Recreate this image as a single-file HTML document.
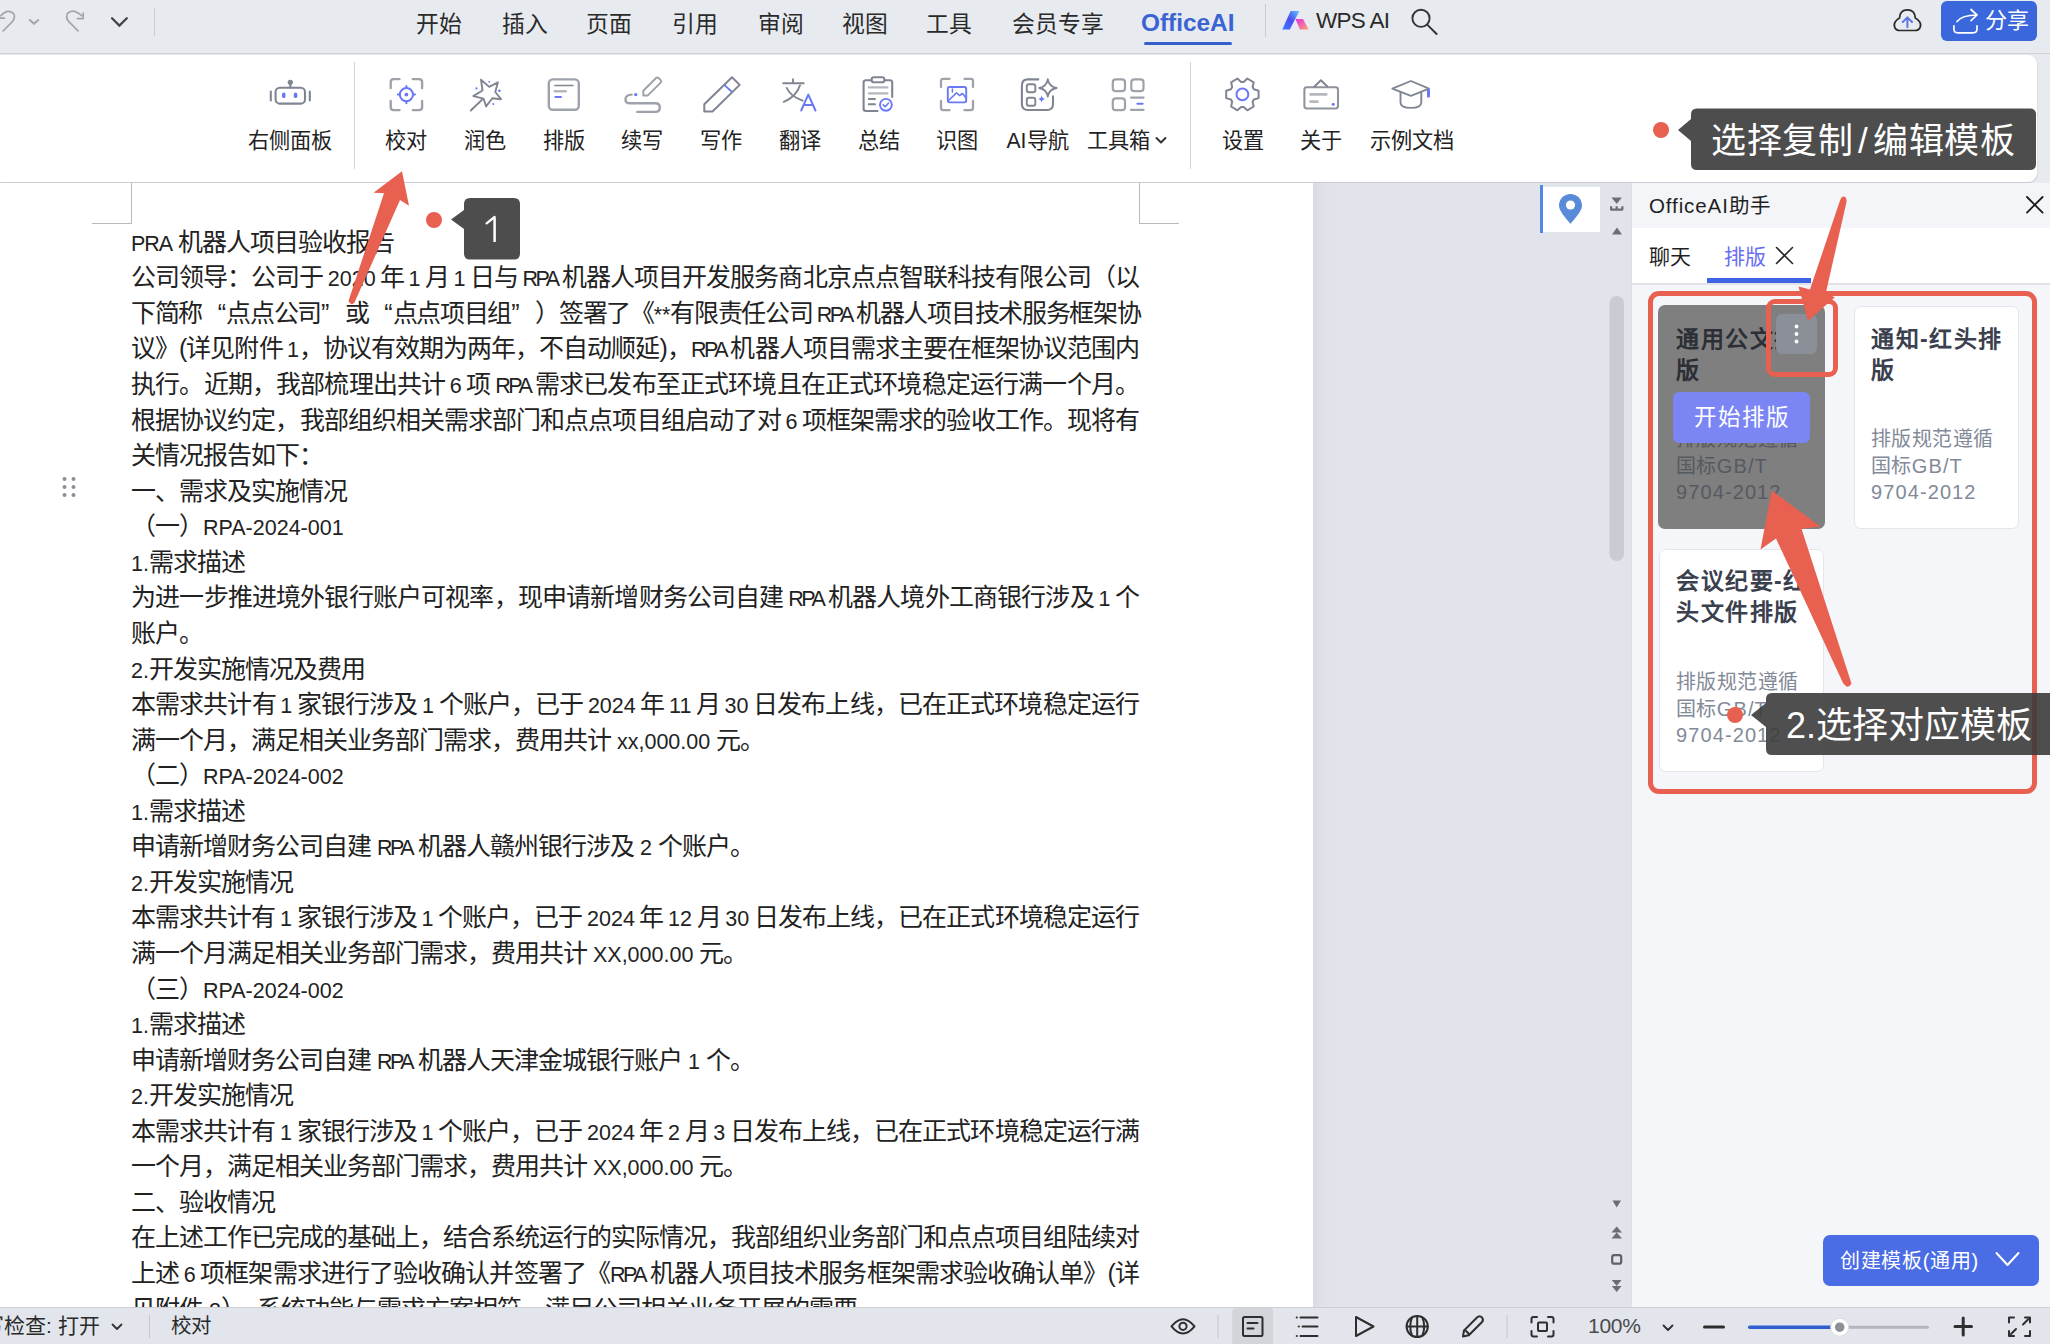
<!DOCTYPE html>
<html lang="zh-CN">
<head>
<meta charset="utf-8">
<style>
*{box-sizing:border-box;margin:0;padding:0}
html,body{width:2050px;height:1344px;overflow:hidden;background:#e7ebef;font-family:"Liberation Sans",sans-serif;color:#222}
.a{position:absolute}
#top{left:0;top:0;width:2050px;height:54px;background:#e7ebef;border-bottom:1px solid #cfd3d8}
.tab{position:absolute;top:9px;font-size:22.8px;line-height:30px;color:#2a2a2a;white-space:nowrap}
#ribbon{left:0;top:55px;width:2037px;height:127px;background:#fff;border-radius:0 9px 9px 0;box-shadow:0 1px 2px rgba(0,0,0,.18)}
.lbl{position:absolute;top:126.5px;font-size:21.2px;line-height:28px;color:#222;white-space:nowrap;transform:translateX(-50%)}
.ico{position:absolute}
.sep{position:absolute;width:1px;background:#d6d8dc}
#doc{left:0;top:183px;width:1313px;height:1124px;background:#fff;overflow:hidden}
#gray{left:1313px;top:183px;width:318px;height:1124px;background:linear-gradient(90deg,#d8dbe2 0,#e0e3ea 12px,#e1e4eb 60px)}
#side{left:1631px;top:183px;width:419px;height:1124px;background:#f5f6f9;border-left:1px solid #dcdee3}
#status{left:0;top:1307px;width:2050px;height:37px;background:#e2e5ec;border-top:1px solid #cdd0d6}
.dl{position:absolute;left:131px;width:1008px;font-size:25px;letter-spacing:-1px;line-height:35.5px;height:35.5px;color:#222;white-space:nowrap}
.j{text-align:justify;text-align-last:justify}
.e{font-size:21.5px;letter-spacing:0}
.r{letter-spacing:-2.5px}
.qo{display:inline-block;width:24px;text-align:right;text-align-last:right;letter-spacing:0}
.qc{display:inline-block;width:24px;text-align:left;text-align-last:left;letter-spacing:0}
.j{word-spacing:-1.5px}
.card{background:#fff;border:1px solid #e4e6ea;border-radius:7px}
.ct{font-size:23px;line-height:31px;font-weight:bold;color:#3a404e;white-space:nowrap;letter-spacing:1.5px}
.cd{font-size:20px;line-height:26.5px;color:#828a98;white-space:nowrap;letter-spacing:0.4px}
.cd b{font-weight:normal;letter-spacing:1.1px}
</style>
</head>
<body>
<div id="top" class="a">
<svg class="a" style="left:0;top:0" width="160" height="54" viewBox="0 0 160 54">
 <path d="M3 31 L12.2 21.8 Q15.8 17.6 13.6 13.6 Q10.8 10.4 6.5 11.6 Q3.4 12.6 0.8 15.8 M0 18.2 H4.4" fill="none" stroke="#a2a5aa" stroke-width="1.7" stroke-linecap="round" stroke-linejoin="round"/>
 <path d="M29.8 20 L34 23.8 L38.2 20" fill="none" stroke="#a2a5aa" stroke-width="2" stroke-linecap="round" stroke-linejoin="round"/>
 <path d="M78 30.8 L68.8 21.6 Q65.2 17.4 67.6 13.4 Q70.4 10.4 74.6 11.4 Q78.2 12.4 81.6 15.6 M83.2 13.2 V18.6 H77.6" fill="none" stroke="#a2a5aa" stroke-width="1.7" stroke-linecap="round" stroke-linejoin="round"/>
 <path d="M112 18.2 L119.4 25.6 L126.8 18.2" fill="none" stroke="#454545" stroke-width="2.3" stroke-linecap="round"/>
 <rect x="154" y="8" width="1" height="28" fill="#c8cbd0"/>
</svg>
<div class="tab" style="left:416px">开始</div>
<div class="tab" style="left:502px">插入</div>
<div class="tab" style="left:586px">页面</div>
<div class="tab" style="left:672px">引用</div>
<div class="tab" style="left:758px">审阅</div>
<div class="tab" style="left:842px">视图</div>
<div class="tab" style="left:926px">工具</div>
<div class="tab" style="left:1012px">会员专享</div>
<div class="tab" style="left:1141px;top:8.3px;font-weight:bold;font-size:24.4px;color:#3b63d4">OfficeAI</div>
<div class="a" style="left:1143.5px;top:41.7px;width:88.5px;height:3.2px;background:#3460cc;border-radius:2px"></div>
<div class="a" style="left:1265px;top:4px;width:1px;height:33px;background:#c8cbd0"></div>
<svg class="a" style="left:0;top:0" width="1450" height="45" viewBox="0 0 1450 45">
 <defs><linearGradient id="wg1" x1="0" y1="1" x2="1" y2="0"><stop offset="0" stop-color="#3d7bff"/><stop offset=".5" stop-color="#4b4cf2"/><stop offset="1" stop-color="#5ccbff"/></linearGradient>
 <linearGradient id="wg2" x1="0" y1="0" x2="1" y2="1"><stop offset="0" stop-color="#e02ee8"/><stop offset="1" stop-color="#ffa070"/></linearGradient></defs>
 <path d="M1282.3 29.4 L1290.6 11 L1299.4 11 L1289.8 29.4 Z" fill="url(#wg1)"/>
 <path d="M1295.5 19 L1303 19 L1308.6 29.4 L1299.9 29.4 Z" fill="url(#wg2)"/>
 <circle cx="1421" cy="18.3" r="8.6" fill="none" stroke="#333" stroke-width="1.9"/>
 <path d="M1427.2 24.6 L1436.6 34" stroke="#333" stroke-width="2" stroke-linecap="round"/>
</svg>
<div class="tab" style="left:1316px;top:6px;font-size:22.5px;color:#2a2a2a;letter-spacing:-0.7px">WPS AI</div>
<div class="a" style="left:1941px;top:1px;width:96px;height:40px;background:#3a67db;border-radius:6px"></div>
<svg class="a" style="left:0;top:0" width="2050" height="45" viewBox="0 0 2050 45">
 <path d="M1900 30.5 C1894 30.5 1893.2 24.5 1895.5 21.5 C1897 19.5 1898.5 18.5 1899.5 18 C1899.8 12.5 1903.2 9.8 1907.4 9.8 C1911.6 9.8 1915 12.5 1915.3 18 C1916.3 18.5 1918 19.5 1919.4 21.5 C1921.7 24.5 1920.8 30.5 1914.8 30.5 Z" fill="none" stroke="#2b2b2b" stroke-width="1.7"/>
 <path d="M1907.4 27.3 V17.8 M1902.8 22 L1907.4 17.4 L1912 22" fill="none" stroke="#5d74e8" stroke-width="2" stroke-linecap="round" stroke-linejoin="round"/>
 <path d="M1953.9 25.8 V29 Q1953.9 32.8 1957.7 32.8 H1973.2 Q1977 32.8 1977 29 V25.8" fill="none" stroke="#fff" stroke-width="1.7" stroke-linecap="round"/>
 <path d="M1957 21.6 Q1962 15 1977 15 M1971 9.5 L1977 15 L1971 20.7" fill="none" stroke="#fff" stroke-width="1.7" stroke-linecap="round" stroke-linejoin="round"/>
</svg>


<div class="tab" style="left:1985px;top:6px;color:#fff;font-size:22px">分享</div>
</div>
<div id="ribbon" class="a"></div>
<svg class="a" style="left:0;top:0" width="1460" height="183" viewBox="0 0 1460 183">
<g fill="none" stroke="#7f8591" stroke-width="2.1" stroke-linecap="round" stroke-linejoin="round">
 <!-- robot -->
 <rect x="275.6" y="87.8" width="29.4" height="15.8" rx="4.2"/>
 <path d="M270.8 91.5 V100.5 M309.8 91.5 V100.5 M290.3 84 V87.5"/>
 <circle cx="290.3" cy="82.3" r="1.6" fill="#7f8591"/>
 <!-- jiaodui brackets -->
 <path d="M390.7 88 V82 Q390.7 79.1 393.6 79.1 H399.5 M412.8 79.1 H419 Q422.1 79.1 422.1 82 V88 M422.1 101 V107.2 Q422.1 110.1 419 110.1 H412.8 M399.5 110.1 H393.6 Q390.7 110.1 390.7 107.2 V101" stroke="#9ea3ab" stroke-width="2.4"/>
 <!-- star wand -->
 <path d="M481 79.7 L489.2 86.9 L497.9 82.3 L495.3 92 L501 99.2 L492.3 98.2 L486.1 106.4 L483.6 98.7 L473.3 96.1 L482.5 90.5 Z" stroke-width="1.9"/>
 <path d="M470.8 110.5 L482 99.7" stroke-width="1.9"/>
 <!-- paiban -->
 <rect x="548.8" y="79.4" width="30" height="30.4" rx="4" stroke="#9ea3ab" stroke-width="2.4"/>
 <path d="M554.8 85.4 H573" stroke-width="1.5"/>
 <path d="M554.8 91.3 H565.6" stroke="#b4b8be" stroke-width="2.6"/>
 <!-- xuxie pencil -->
 <path d="M643.3 90.8 L655.8 78.3 Q657.3 76.8 658.8 78.3 L660.4 79.9 Q661.9 81.4 660.4 82.9 L647.9 95.4 L643.3 95.4 Z" stroke="#9ea3ab" stroke-width="2"/>
 <path d="M631.6 94.6 Q625.5 95 625.5 99.2 Q625.5 103.3 630 103.3 H655.5 Q659.8 103.3 659.8 107.6 Q659.8 111.9 655.5 111.9 H637.3" stroke="#9ea3ab" stroke-width="2.4"/>
 <!-- xiezuo pencil -->
 <path d="M704.3 111.5 H712.5 L739.7 84.9 L732 77.2 L704.3 104.3 Z" stroke-width="2"/>
 <!-- wen -->
 <path d="M783.2 83.3 H803.7 M793 79.2 V83 M786.8 88 Q790 96 802.7 100.7 M800 85.4 Q796 97 783.7 101.8" stroke-width="1.9"/>
 <!-- clipboard -->
 <path d="M871.5 80.2 H866 Q863.6 80.2 863.6 82.6 V108.8 Q863.6 111 866 111 H877.5 M884.6 80.2 H889.8 Q892.2 80.2 892.2 82.6 V97" stroke-width="2.1"/>
 <rect x="871.6" y="77.2" width="12.8" height="5" rx="2.3"/>
 <path d="M868.8 87.4 H887.5 M868.8 93.4 H887.5" stroke="#b4b8be" stroke-width="2.1"/>
 <path d="M868.8 99 H875 M868.8 104.3 H875" stroke-width="1.9"/>
 <!-- shitu brackets -->
 <path d="M941 87 V81 Q941 78.8 943.5 78.8 H949.5 M964.5 78.8 H970.8 Q973 78.8 973 81 V87 M973 101 V107.8 Q973 110.2 970.8 110.2 H964.5 M949.5 110.2 H943.5 Q941 110.2 941 107.8 V101" stroke="#9ea3ab" stroke-width="2.3"/>
 <!-- ai nav -->
 <path d="M1038.3 79.4 H1028 Q1021.9 79.4 1021.9 85.5 V104 Q1021.9 110 1028 110 H1047 Q1053 110 1053 104 V96.4" stroke-width="2.1"/>
 <rect x="1026.8" y="84.2" width="8.5" height="8" rx="2" stroke-width="1.9"/>
 <rect x="1026.8" y="97.8" width="8.5" height="8" rx="2" stroke-width="1.9"/>
 <path d="M1047.8 79.2 Q1049 86.8 1056.6 88 Q1049 89.2 1047.8 96.6 Q1046.6 89.2 1039.2 88 Q1046.6 86.8 1047.8 79.2 Z" stroke-width="1.8"/>
 <!-- toolbox -->
 <rect x="1112.8" y="79.4" width="12.2" height="11.8" rx="3" stroke="#9ea3ab" stroke-width="2.2"/>
 <rect x="1131.3" y="79.4" width="12.2" height="11.8" rx="3" stroke="#9ea3ab" stroke-width="2.2"/>
 <rect x="1112.8" y="98.4" width="12.2" height="11.8" rx="3" stroke="#9ea3ab" stroke-width="2.2"/>
 <path d="M1131 97.6 H1143.6 M1131 109.8 H1143.6" stroke="#9ea3ab" stroke-width="2.2"/>
 <!-- gear -->
 <path d="M1253.9 89.3 L1258.6 90.7 L1258.6 98.1 L1253.9 99.5 L1252.6 101.8 L1253.7 106.5 L1247.3 110.3 L1243.7 106.9 L1241.1 106.9 L1237.5 110.3 L1231.1 106.5 L1232.2 101.8 L1230.9 99.5 L1226.2 98.1 L1226.2 90.7 L1230.9 89.3 L1232.2 87.0 L1231.1 82.3 L1237.5 78.5 L1241.1 81.9 L1243.7 81.9 L1247.3 78.5 L1253.7 82.3 L1252.6 87.0 Z" stroke-width="2"/>
 <!-- about sign -->
 <rect x="1304.4" y="87.2" width="33.6" height="21.3" rx="2.4" stroke="#8e939d" stroke-width="2.1"/>
 <path d="M1314.5 86.5 L1320.9 80.2 L1327.3 86.5" stroke-width="2"/>
 <path d="M1310.6 94.4 H1326.2" stroke="#b4b8be" stroke-width="2.8"/>
 <path d="M1310.6 101.6 H1317.4" stroke="#b4b8be" stroke-width="2.8"/>
 <!-- grad cap -->
 <path d="M1392.3 88.7 L1410.9 81 L1429 88.7 L1410.9 95.8 Z" stroke-width="1.8"/>
 <path d="M1400.5 92.2 V102.5 Q1400.5 107.9 1410.9 107.9 Q1421.3 107.9 1421.3 102.5 V92.2" stroke-width="1.9"/>
</g>
<g fill="#6b78f6" stroke="none">
 <rect x="282" y="92.4" width="3.5" height="5.7" rx="1.7"/>
 <rect x="293.8" y="92.4" width="3.5" height="5.7" rx="1.7"/>
 <circle cx="406.4" cy="94.6" r="1.9"/>
 <circle cx="476.4" cy="88.4" r="1.1"/><circle cx="489.2" cy="81.8" r="0.9"/><circle cx="499.4" cy="90.7" r="1.3"/><circle cx="493.3" cy="104" r="1"/>
 <rect x="554.3" y="95.9" width="7.7" height="2" rx="1"/>
 <circle cx="635.7" cy="94.6" r="1.7"/>
 <circle cx="1333.2" cy="104.2" r="1.5"/>
 <path d="M1041.6 95.5 Q1042.1 98.5 1045.1 99 Q1042.1 99.5 1041.6 102.5 Q1041.1 99.5 1038.1 99 Q1041.1 98.5 1041.6 95.5 Z"/>
 <rect x="1427" y="89" width="3" height="8.4" rx="1"/>
 <rect x="1136.4" y="102.7" width="7.3" height="2" rx="1"/>
</g>
<g fill="none" stroke="#6b78f6" stroke-width="2" stroke-linecap="round" stroke-linejoin="round">
 <circle cx="406.4" cy="94.6" r="6.6"/>
 <path d="M406.4 86 V88 M406.4 101.2 V103.2 M397.8 94.6 H399.8 M413 94.6 H415"/>
 <path d="M724.8 85.4 L731.5 91.5" stroke-width="1.8"/>
 <path d="M801.2 110.5 L808.3 94.6 L815.5 110.5 M803.5 105 H813" stroke-width="2"/>
 <circle cx="885.9" cy="104.8" r="5.9" stroke-width="1.9"/>
 <path d="M883.2 104.9 L885.2 106.7 L888.6 103" stroke-width="1.6"/>
 <rect x="947.8" y="87" width="18.4" height="15.4" rx="1.8" stroke-width="1.9"/>
 <path d="M948.5 100.5 L956.5 92.8 L959.5 95.5 L962.5 93.5 L966 98" stroke-width="1.6"/>
 <path d="M952.4 89 V92" stroke-width="1.6"/>
 <circle cx="1242.4" cy="94.4" r="5.9" stroke-width="2"/>
</g>
<rect x="354" y="62" width="1" height="107" fill="#d2d4d8"/>
<rect x="1190" y="62" width="1" height="107" fill="#d2d4d8"/>
</svg>
<div class="lbl" style="left:290.3px">右侧面板</div>
<div class="lbl" style="left:406.3px">校对</div>
<div class="lbl" style="left:484.5px">润色</div>
<div class="lbl" style="left:563.5px">排版</div>
<div class="lbl" style="left:642px">续写</div>
<div class="lbl" style="left:721.3px">写作</div>
<div class="lbl" style="left:799.7px">翻译</div>
<div class="lbl" style="left:878.6px">总结</div>
<div class="lbl" style="left:956.8px">识图</div>
<div class="lbl" style="left:1037.5px">AI导航</div>
<div class="lbl" style="left:1118.8px">工具箱</div>
<svg class="a" style="left:1154px;top:134px" width="14" height="12" viewBox="0 0 14 12"><path d="M2.5 4 L7 8.5 L11.5 4" fill="none" stroke="#333" stroke-width="2" stroke-linecap="round" stroke-linejoin="round"/></svg>
<div class="lbl" style="left:1242.5px">设置</div>
<div class="lbl" style="left:1320.8px">关于</div>
<div class="lbl" style="left:1411.5px">示例文档</div>
<div id="doc" class="a">
<div class="a" style="left:131px;top:0;width:1px;height:40px;background:#b9b9b9"></div>
<div class="a" style="left:92px;top:40px;width:40px;height:1px;background:#b9b9b9"></div>
<div class="a" style="left:1139px;top:0;width:1px;height:40px;background:#b9b9b9"></div>
<div class="a" style="left:1139px;top:40px;width:40px;height:1px;background:#b9b9b9"></div>
<svg class="a" style="left:60px;top:292px" width="20" height="28" viewBox="0 0 20 28"><g fill="#8a8f97"><circle cx="4.5" cy="4" r="2"/><circle cx="13.5" cy="4" r="2"/><circle cx="4.5" cy="12" r="2"/><circle cx="13.5" cy="12" r="2"/><circle cx="4.5" cy="20" r="2"/><circle cx="13.5" cy="20" r="2"/></g></svg>
<div class="dl" style="top:41.8px"><span class="e" style="letter-spacing:-1px">PRA</span> 机器人项目验收报告</div>
<div class="dl j" style="top:77.3px">公司领导：公司于 <span class="e">2020</span> 年 <span class="e">1</span> 月 <span class="e">1</span> 日与 <span class="e r">RPA</span> 机器人项目开发服务商北京点点智联科技有限公司（以</div>
<div class="dl j" style="top:112.9px;letter-spacing:-1.3px">下简称<span class="qo">“</span>点点公司<span class="qc">”</span>或<span class="qo">“</span>点点项目组<span class="qc">”</span>）签署了《<span class="e">**</span>有限责任公司 <span class="e r">RPA</span> 机器人项目技术服务框架协</div>
<div class="dl j" style="top:148.4px">议》(详见附件 <span class="e">1</span>，协议有效期为两年，不自动顺延)，<span class="e r">RPA</span> 机器人项目需求主要在框架协议范围内</div>
<div class="dl j" style="top:184.0px">执行。近期，我部梳理出共计 <span class="e">6</span> 项 <span class="e r">RPA</span> 需求已发布至正式环境且在正式环境稳定运行满一个月。</div>
<div class="dl j" style="top:219.6px">根据协议约定，我部组织相关需求部门和点点项目组启动了对 <span class="e">6</span> 项框架需求的验收工作。现将有</div>
<div class="dl" style="top:255.1px">关情况报告如下：</div>
<div class="dl" style="top:290.7px">一、需求及实施情况</div>
<div class="dl" style="top:326.2px">（一）<span class="e">RPA-2024-001</span></div>
<div class="dl" style="top:361.8px"><span class="e">1.</span>需求描述</div>
<div class="dl j" style="top:397.4px">为进一步推进境外银行账户可视率，现申请新增财务公司自建 <span class="e r">RPA</span> 机器人境外工商银行涉及 <span class="e">1</span> 个</div>
<div class="dl" style="top:432.9px">账户。</div>
<div class="dl" style="top:468.5px"><span class="e">2.</span>开发实施情况及费用</div>
<div class="dl j" style="top:504.0px">本需求共计有 <span class="e">1</span> 家银行涉及 <span class="e">1</span> 个账户，已于 <span class="e">2024</span> 年 <span class="e">11</span> 月 <span class="e">30</span> 日发布上线，已在正式环境稳定运行</div>
<div class="dl" style="top:539.6px">满一个月，满足相关业务部门需求，费用共计 <span class="e">xx,000.00</span> 元。</div>
<div class="dl" style="top:575.2px">（二）<span class="e">RPA-2024-002</span></div>
<div class="dl" style="top:610.7px"><span class="e">1.</span>需求描述</div>
<div class="dl" style="top:646.3px">申请新增财务公司自建 <span class="e r">RPA</span> 机器人赣州银行涉及 <span class="e">2</span> 个账户。</div>
<div class="dl" style="top:681.8px"><span class="e">2.</span>开发实施情况</div>
<div class="dl j" style="top:717.4px">本需求共计有 <span class="e">1</span> 家银行涉及 <span class="e">1</span> 个账户，已于 <span class="e">2024</span> 年 <span class="e">12</span> 月 <span class="e">30</span> 日发布上线，已在正式环境稳定运行</div>
<div class="dl" style="top:753.0px">满一个月满足相关业务部门需求，费用共计 <span class="e">XX,000.00</span> 元。</div>
<div class="dl" style="top:788.5px">（三）<span class="e">RPA-2024-002</span></div>
<div class="dl" style="top:824.1px"><span class="e">1.</span>需求描述</div>
<div class="dl" style="top:859.6px">申请新增财务公司自建 <span class="e r">RPA</span> 机器人天津金城银行账户 <span class="e">1</span> 个。</div>
<div class="dl" style="top:895.2px"><span class="e">2.</span>开发实施情况</div>
<div class="dl j" style="top:930.8px">本需求共计有 <span class="e">1</span> 家银行涉及 <span class="e">1</span> 个账户，已于 <span class="e">2024</span> 年 <span class="e">2</span> 月 <span class="e">3</span> 日发布上线，已在正式环境稳定运行满</div>
<div class="dl" style="top:966.3px">一个月，满足相关业务部门需求，费用共计 <span class="e">XX,000.00</span> 元。</div>
<div class="dl" style="top:1001.9px">二、验收情况</div>
<div class="dl j" style="top:1037.4px">在上述工作已完成的基础上，结合系统运行的实际情况，我部组织业务部门和点点项目组陆续对</div>
<div class="dl j" style="top:1073.0px">上述 <span class="e">6</span> 项框架需求进行了验收确认并签署了《<span class="e r">RPA</span> 机器人项目技术服务框架需求验收确认单》(详</div>
<div class="dl" style="top:1108.6px">见附件 <span class="e">2</span>）。系统功能与需求方案相符，满足公司相关业务开展的需要。</div>
</div>
<div id="gray" class="a"></div>
<div class="a" style="left:1540px;top:185px;width:3px;height:48px;background:#4f86e8"></div>
<div class="a" style="left:1543px;top:187px;width:56.5px;height:44.5px;background:#fff"></div>
<svg class="a" style="left:1500px;top:183px" width="131" height="1124" viewBox="1500 183 131 1124">
 <path d="M1570.5 223.7 C1566 218.5 1559 211 1559 205.5 C1559 199 1564 194 1570.5 194 C1577 194 1582 199 1582 205.5 C1582 211 1575 218.5 1570.5 223.7 Z" fill="#5a8bd8"/>
 <circle cx="1570.5" cy="205" r="4.6" fill="#fff"/>
 <g fill="#6c6e73">
  <path d="M1612.3 197.5 Q1611.6 197.2 1612 198.2 L1616.2 203.3 Q1616.7 203.8 1617.2 203.3 L1621.4 198.2 Q1621.8 197.2 1621 197.5 Z"/>
  <path d="M1610 206.2 H1612.2 V208.6 H1615.6 V206.2 H1617.8 V208.6 H1621.3 V206.2 H1623.5 V209.2 Q1623.5 210.8 1621.9 210.8 H1611.6 Q1610 210.8 1610 209.2 Z"/>
  <path d="M1612 234.6 H1622 L1617 227.6 Z"/>
  <path d="M1612.5 1200.5 H1621 L1616.7 1207.5 Z"/>
  <path d="M1611.5 1232.5 H1622 L1616.7 1226.5 Z M1611.5 1238.5 H1622 L1616.7 1232.5 Z"/>
  <path d="M1611.8 1280 H1621.6 L1616.7 1286 Z M1611.8 1286 H1621.6 L1616.7 1292 Z"/>
 </g>
 <rect x="1612.2" y="1255.2" width="9" height="8.5" rx="2" fill="none" stroke="#5d6068" stroke-width="2.2"/>
 <rect x="1609.5" y="296" width="14.5" height="265" rx="7.2" fill="#c9ccd1"/>
</svg>
<div id="side" class="a"></div>
<div class="a" style="left:1632px;top:183px;width:418px;height:45px;background:#f3f5f8"></div>
<div class="a" style="left:1649px;top:190px;font-size:20.5px;line-height:32px;color:#1f1f1f;white-space:nowrap;letter-spacing:0.9px">OfficeAI助手</div>
<svg class="a" style="left:2022px;top:192px" width="26" height="26" viewBox="0 0 26 26"><path d="M5 5 L20.6 20.6 M20.6 5 L5 20.6" stroke="#1a1a1a" stroke-width="1.8" stroke-linecap="round"/></svg>
<div class="a" style="left:1632px;top:228px;width:418px;height:55px;background:#fff"></div>
<div class="a" style="left:1632px;top:283px;width:418px;height:2px;background:#e1e2e6"></div>
<div class="a" style="left:1649px;top:241px;font-size:21px;line-height:32px;color:#1f1f1f;white-space:nowrap">聊天</div>
<div class="a" style="left:1724px;top:241px;font-size:21px;line-height:32px;color:#6a70f2;white-space:nowrap">排版</div>
<svg class="a" style="left:1772px;top:243px" width="26" height="26" viewBox="0 0 26 26"><path d="M4.5 4.5 L20.5 20.5 M20.5 4.5 L4.5 20.5" stroke="#262626" stroke-width="1.6" stroke-linecap="round"/></svg>
<div class="a" style="left:1707px;top:278px;width:104px;height:4.5px;background:#3e64e3"></div>
<div class="a" style="left:1648px;top:290.5px;width:389px;height:503px;border:5.5px solid #e8604f;border-radius:11px"></div>
<div class="a" style="left:1658px;top:304.5px;width:167px;height:224.5px;background:#7f7f7f;border-radius:7px"></div>
<div class="a card" style="left:1854px;top:306px;width:165px;height:223px"></div>
<div class="a card" style="left:1659px;top:548.5px;width:165px;height:223.5px"></div>
<div class="a ct" style="left:1676px;top:324px;color:#2c2f36">通用公文排<br>版</div>
<div class="a cd" style="left:1676px;top:426px;color:#565a61">排版规范遵循<br>国标<b>GB/T</b><br><b>9704-2012</b></div>
<div class="a ct" style="left:1871px;top:324px">通知-红头排<br>版</div>
<div class="a cd" style="left:1871px;top:426px">排版规范遵循<br>国标<b>GB/T</b><br><b>9704-2012</b></div>
<div class="a ct" style="left:1676px;top:566px">会议纪要-红<br>头文件排版</div>
<div class="a cd" style="left:1676px;top:669px">排版规范遵循<br>国标<b>GB/T</b><br><b>9704-2012</b></div>
<div class="a" style="left:1775.5px;top:314px;width:41px;height:40px;background:#8a8f98;border-radius:6px"></div>
<svg class="a" style="left:1775.5px;top:314px" width="41" height="40" viewBox="0 0 41 40"><g fill="#fff"><circle cx="20.5" cy="12.5" r="1.9"/><circle cx="20.5" cy="20" r="1.9"/><circle cx="20.5" cy="27.5" r="1.9"/></g></svg>
<div class="a" style="left:1765.5px;top:298.5px;width:72.5px;height:78px;border:5px solid #e8604f;border-radius:9px"></div>
<div class="a" style="left:1673px;top:392px;width:137px;height:51px;background:#7b86f4;border-radius:6px;color:#fff;font-size:22.5px;line-height:51px;text-align:center;letter-spacing:1px">开始排版</div>
<div class="a" style="left:1823px;top:1234.5px;width:216px;height:51px;background:#4a6de6;border-radius:7px"></div>
<div class="a" style="left:1840px;top:1245px;font-size:20px;line-height:32px;color:#fff;white-space:nowrap;letter-spacing:0.7px">创建模板(通用)</div>
<svg class="a" style="left:1994px;top:1250px" width="28" height="20" viewBox="0 0 28 20"><path d="M2.5 3 L13.5 15 L24.5 3" fill="none" stroke="#fff" stroke-width="2" stroke-linecap="round" stroke-linejoin="round"/></svg>
<div id="status" class="a"></div>
<div class="a" style="left:-17px;top:1309px;font-size:21px;line-height:34px;color:#2a2a2a;white-space:nowrap">写检查: 打开</div>
<svg class="a" style="left:0;top:1307px" width="2050" height="37" viewBox="0 1307 2050 37">
 <path d="M112.5 1324.5 L117 1329 L121.5 1324.5" fill="none" stroke="#333" stroke-width="1.8" stroke-linecap="round" stroke-linejoin="round"/>
 <rect x="149" y="1315" width="1" height="23" fill="#c4c7cc"/>
 <rect x="1217.5" y="1315" width="1" height="23" fill="#c4c7cc"/>
 <rect x="1506.5" y="1315" width="1" height="23" fill="#c4c7cc"/>
 <path d="M1232.3 1344 V1312 Q1232.3 1308 1236.3 1308 H1269 Q1273 1308 1273 1312 V1344 Z" fill="#d3d5da"/>
 <g fill="none" stroke="#2e2e2e" stroke-width="2" stroke-linecap="round" stroke-linejoin="round">
  <path d="M1171.5 1326.3 Q1183 1312 1194.5 1326.3 Q1183 1340.5 1171.5 1326.3 Z"/>
  <circle cx="1183" cy="1326.3" r="3.6"/>
  <rect x="1243" y="1317" width="19.5" height="19" rx="1.5"/>
  <path d="M1247.5 1323 H1257.5 M1247.5 1328.5 H1253.5"/>
  <path d="M1300.5 1317.5 H1317.5 M1302.5 1326.5 H1317.5 M1300.5 1336 H1317.5" />
  <path d="M1356 1317 L1373.5 1326.5 L1356 1336 Z"/>
  <circle cx="1417.2" cy="1326.5" r="10.6"/>
  <path d="M1406.6 1326.5 H1427.8 M1417.2 1316 V1337 M1412 1317.5 Q1408.5 1326.5 1412 1335.5 M1422.4 1317.5 Q1426 1326.5 1422.4 1335.5"/>
  <path d="M1463 1336.5 L1464 1330.5 L1477 1317.5 Q1479.5 1315 1482 1317.5 Q1484 1320 1481.8 1322.3 L1468.8 1335.3 Z M1466 1331 L1469.5 1334.5"/>
  <path d="M1531.5 1322.5 V1319 Q1531.5 1317 1533.5 1317 H1537 M1548 1317 H1551.5 Q1553.5 1317 1553.5 1319 V1322.5 M1553.5 1331 V1334.5 Q1553.5 1336.5 1551.5 1336.5 H1548 M1537 1336.5 H1533.5 Q1531.5 1336.5 1531.5 1334.5 V1331"/>
  <rect x="1538" y="1322.5" width="9" height="8.5" rx="1"/>
  <path d="M1663.5 1325.5 L1668 1330 L1672.5 1325.5" stroke-width="1.8"/>
  <path d="M1704.5 1327 H1723.5" stroke-width="3"/>
  <path d="M1955 1326.5 H1971.5 M1963.2 1318 V1335" stroke-width="3"/>
  <path d="M2009 1322.5 V1317.5 H2014 M2025 1317.5 H2030 V1322.5 M2030 1331 V1336 H2025 M2014 1336 H2009 V1331 M2011 1334 L2016 1329 M2028 1319.5 L2023 1324.5" stroke-width="2"/>
 </g>
 <g fill="#2e2e2e"><circle cx="1296.8" cy="1317.5" r="1.1"/><circle cx="1298.8" cy="1326.5" r="1.1"/><circle cx="1296.8" cy="1336" r="1.1"/></g>
 <rect x="1748" y="1325.5" width="91" height="3.5" rx="1.7" fill="#2f5fcf"/>
 <rect x="1839" y="1325.8" width="90" height="3" rx="1.5" fill="#b3b6bb"/>
 <circle cx="1839.7" cy="1327.2" r="9" fill="#fff" stroke="#dcdde0" stroke-width="1"/>
 <circle cx="1839.7" cy="1327.2" r="4.8" fill="#8d9096"/>
</svg>
<div class="a" style="left:171px;top:1309px;font-size:20.5px;line-height:34px;color:#2a2a2a;white-space:nowrap">校对</div>
<div class="a" style="left:1588px;top:1308px;font-size:21px;line-height:36px;color:#4a4a4a;white-space:nowrap;letter-spacing:-0.3px">100%</div>
<svg class="a" style="left:0;top:0" width="2050" height="1344" viewBox="0 0 2050 1344">
 <g fill="#e8604f">
  <path d="M402 171.3 L373.5 192.7 L384 193.3 L348.5 301 Q350.8 306.5 354.5 302.5 L400 200 L409 205.8 Z"/>
  <circle cx="434" cy="220" r="8"/>
  <path d="M1771.7 490.5 L1760.5 549.6 L1776 538.5 L1843 683 Q1848 690 1851.5 683.5 L1801.6 529 L1820.4 526.5 Z"/>
  <circle cx="1735" cy="715" r="8"/>
  <circle cx="1661" cy="130" r="8"/>
 </g>
 <path d="M1840 200.5 L1810 289.5 L1798.5 286.5 L1808 321 L1834.8 297.3 L1825.8 293 L1846.5 202 Q1847 196.5 1843 196.5 Q1841 197 1840 200.5 Z" fill="#e8604f"/>
 <g fill="#4d4d4d">
  <path d="M470 198 H514 Q520 198 520 204 V253.5 Q520 259.5 514 259.5 H470 Q464 259.5 464 253.5 V229 L451 219.5 L464 210 V204 Q464 198 470 198 Z"/>
  <path d="M1697 108.6 H2030 Q2036 108.6 2036 114.6 V164 Q2036 170 2030 170 H1697 Q1691 170 1691 164 V141 L1678 130 L1691 119 V114.6 Q1691 108.6 1697 108.6 Z"/>
 </g>
 <path d="M1772 693 H2050 V755 H1772 Q1766 755 1766 749 V727 L1751 715 L1766 703 V699 Q1766 693 1772 693 Z" fill="rgba(60,60,60,0.9)"/>
</svg>
<svg class="a" style="left:480px;top:212px" width="24" height="34" viewBox="480 212 24 34"><path d="M494.6 217.6 V242" stroke="#fff" stroke-width="2.5"/><path d="M494.6 217 L486.6 223.4" stroke="#fff" stroke-width="2.3" stroke-linecap="round"/></svg>
<div class="a" style="left:1711px;top:118px;font-size:35px;line-height:46px;color:#fff;white-space:nowrap;letter-spacing:0.5px">选择复制<span style="margin:0 5px">/</span>编辑模板</div>
<div class="a" style="left:1786px;top:703px;font-size:36px;line-height:46px;color:#fff;white-space:nowrap">2.选择对应模板</div>
</body>
</html>
